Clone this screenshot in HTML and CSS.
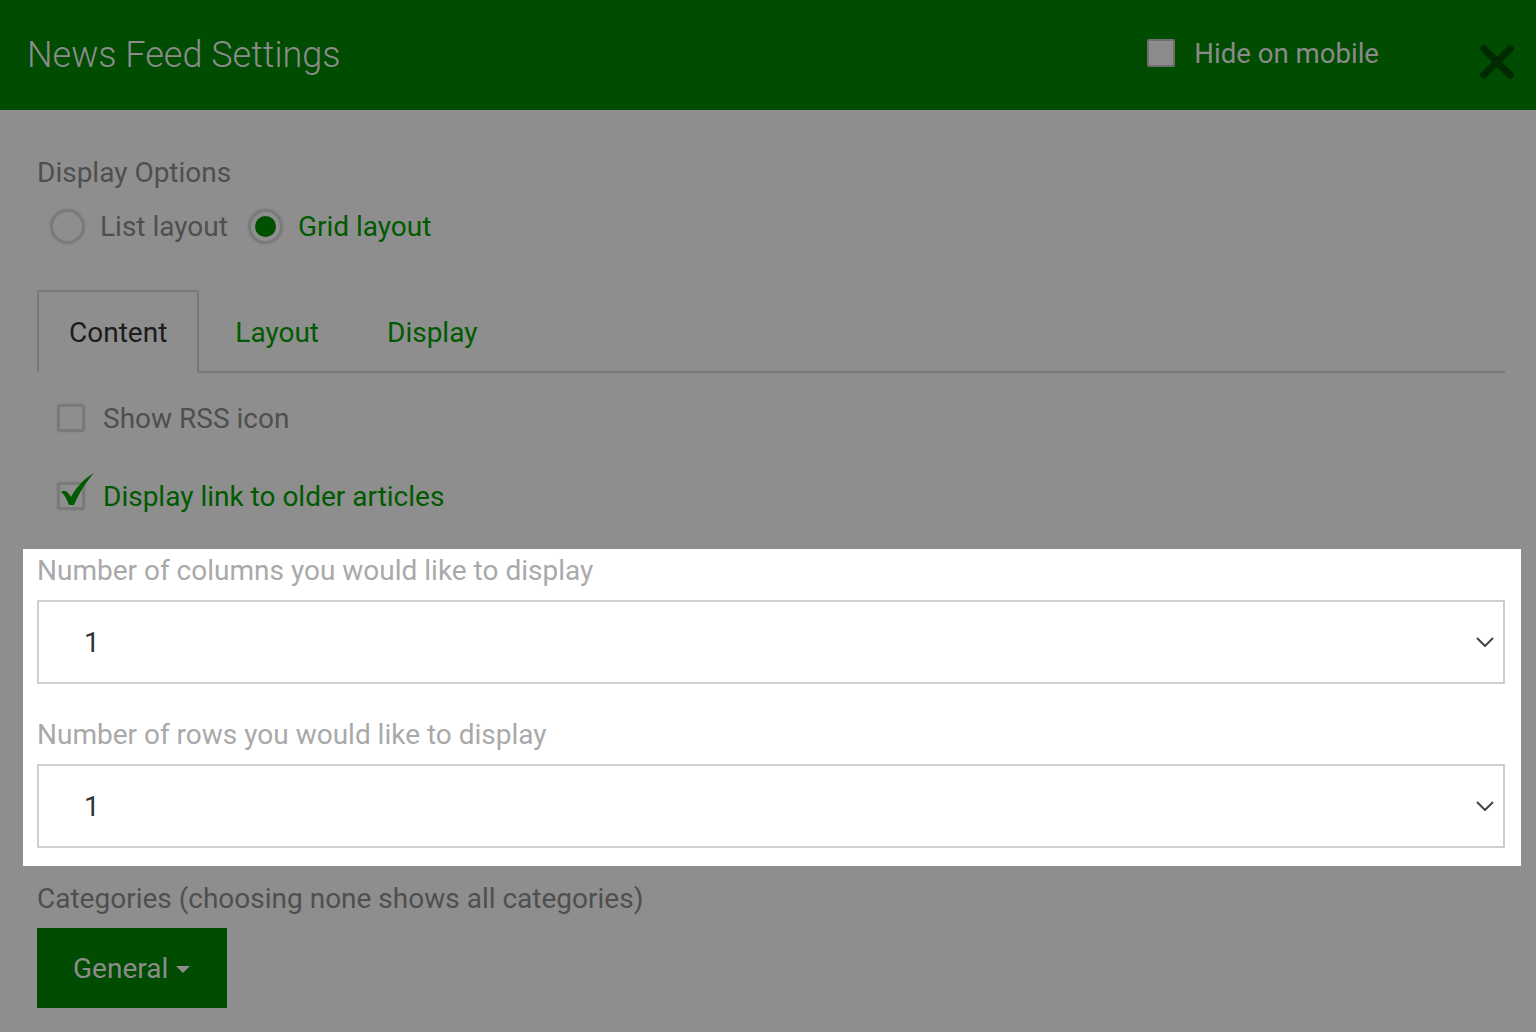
FILE: index.html
```html
<!DOCTYPE html>
<html lang="en">
<head>
    <meta charset="UTF-8">
    <title>News Feed Settings</title>
    <link rel="stylesheet" href="styles.css">
</head>
<body>
    <div class="modal">
        <div class="modal-header">
            <h1 class="modal-title">News Feed Settings</h1>
            <label class="mobile-toggle">
                <span class="mobile-box"></span>
                <span>Hide on mobile</span>
            </label>
            <button class="close-btn" title="Close">
                <svg width="34" height="34" viewBox="0 0 34 34">
                    <path d="M4 4 L30 30 M30 4 L4 30" stroke="#002a00" stroke-width="7" stroke-linecap="square"/>
                </svg>
            </button>
        </div>

        <div class="modal-body">
            <div class="section-title">Display Options</div>
            <div class="radio-row">
                <label class="radio">
                    <span class="radio-circle"></span>
                    <span>List layout</span>
                </label>
                <label class="radio checked">
                    <span class="radio-circle"><span class="radio-dot"></span></span>
                    <span>Grid layout</span>
                </label>
            </div>

            <ul class="tabs">
                <li class="tab active"><a>Content</a></li>
                <li class="tab"><a>Layout</a></li>
                <li class="tab"><a>Display</a></li>
            </ul>

            <label class="check-row">
                <span class="check-box"></span>
                <span>Show RSS icon</span>
            </label>
            <label class="check-row checked">
                <span class="check-box">
                    <svg class="tick" width="40" height="40" viewBox="0 0 40 40">
                        <path d="M2 21 C6 18 9 21 12 26 C18 15 26 7 35 2 C28 10 21 20 15 34 L10 34 C8 29 6 24 2 21 Z" fill="#005a00"/>
                    </svg>
                </span>
                <span>Display link to older articles</span>
            </label>

            <div class="highlight">
                <div class="field-label">Number of columns you would like to display</div>
                <div class="select">
                    <span>1</span>
                    <svg width="18" height="10" viewBox="0 0 18 10">
                        <path d="M1 1 L9 9 L17 1" fill="none" stroke="#444" stroke-width="2"/>
                    </svg>
                </div>
                <div class="field-label second">Number of rows you would like to display</div>
                <div class="select">
                    <span>1</span>
                    <svg width="18" height="10" viewBox="0 0 18 10">
                        <path d="M1 1 L9 9 L17 1" fill="none" stroke="#444" stroke-width="2"/>
                    </svg>
                </div>
            </div>

            <div class="section-title categories">Categories (choosing none shows all categories)</div>
            <button class="cat-btn">General <span class="caret"></span></button>
        </div>
    </div>
</body>
</html>
```

FILE: styles.css
```css
* {
    margin: 0;
    padding: 0;
    box-sizing: border-box;
}

body {
    font-family: Roboto, 'Liberation Sans', sans-serif;
    font-size: 28px;
    background: #8e8e8e;
    color: #4f4f4f;
    height: 1032px;
    overflow: hidden;
}

.modal-header {
    display: flex;
    align-items: center;
    height: 110px;
    background: #004c00;
    padding: 0 22px 0 27px;
}

.modal-title {
    flex: 1;
    font-size: 36px;
    font-weight: 300;
    color: #8c8c8c;
}

.mobile-toggle {
    display: flex;
    align-items: center;
    gap: 19px;
    color: #8a8a8a;
    font-size: 27.6px;
    margin-top: -4px;
}

.mobile-box {
    width: 28px;
    height: 28px;
    background: #8c8c8c;
    border: 2px solid #6e6e6e;
    border-radius: 2px;
}

.close-btn {
    background: none;
    border: none;
    margin-left: 101px;
    margin-top: 14px;
    display: flex;
}

.modal-body {
    padding: 46px 31px 0 37px;
}

.section-title {
    line-height: 34px;
}

.radio-row {
    display: flex;
    gap: 20px;
    margin-top: 19px;
    padding-left: 13px;
    height: 34px;
}

.radio {
    display: flex;
    align-items: center;
    gap: 15px;
}

.radio-circle {
    width: 35px;
    height: 35px;
    border-radius: 50%;
    border: 3px solid #7a7a7a;
    box-shadow: 0 0 2px #7a7a7a;
    display: flex;
    align-items: center;
    justify-content: center;
}

.radio-dot {
    width: 21px;
    height: 21px;
    border-radius: 50%;
    background: #005000;
}

.radio.checked {
    color: #005a00;
}

.tabs {
    list-style: none;
    display: flex;
    margin-top: 47px;
    border-bottom: 2px solid #797979;
}

.tab {
    margin-right: 4px;
    margin-bottom: -2px;
}

.tab a {
    display: block;
    height: 83px;
    line-height: 81px;
    padding: 0 30px;
    border: 2px solid transparent;
    color: #005a00;
}

.tab.active a {
    border-color: #797979;
    border-bottom-color: #8e8e8e;
    color: #1c1c1c;
}

.check-row {
    display: flex;
    align-items: center;
    gap: 18px;
    padding-left: 20px;
    height: 34px;
    margin-top: 28px;
}

.check-row + .check-row {
    margin-top: 44px;
}

.check-box {
    position: relative;
    width: 28px;
    height: 28px;
    border: 3px solid #7a7a7a;
    border-radius: 3px;
    box-shadow: 0 0 2px #7a7a7a;
}

.tick {
    position: absolute;
    left: -1px;
    top: -14px;
}

.check-row.checked {
    color: #005a00;
}

.highlight {
    background: #fff;
    margin: 36px -16px 0 -14px;
    padding: 5px 16px 18px 14px;
}

.field-label {
    color: #a9a9a9;
    line-height: 34px;
}

.field-label.second {
    margin-top: 34px;
}

.select {
    display: flex;
    align-items: center;
    justify-content: space-between;
    height: 84px;
    margin-top: 12px;
    border: 2px solid #cfcfcf;
    padding: 0 9px 0 45px;
    color: #333;
}

.categories {
    margin-top: 16px;
}

.cat-btn {
    margin-top: 12px;
    width: 190px;
    height: 80px;
    background: #004c00;
    border: none;
    font-family: inherit;
    font-size: 28px;
    color: #8c8c8c;
    display: flex;
    align-items: center;
    padding-left: 36px;
    gap: 8px;
}

.caret {
    width: 0;
    height: 0;
    border-left: 7px solid transparent;
    border-right: 7px solid transparent;
    border-top: 7px solid #8c8c8c;
    margin-top: 3px;
}
```
